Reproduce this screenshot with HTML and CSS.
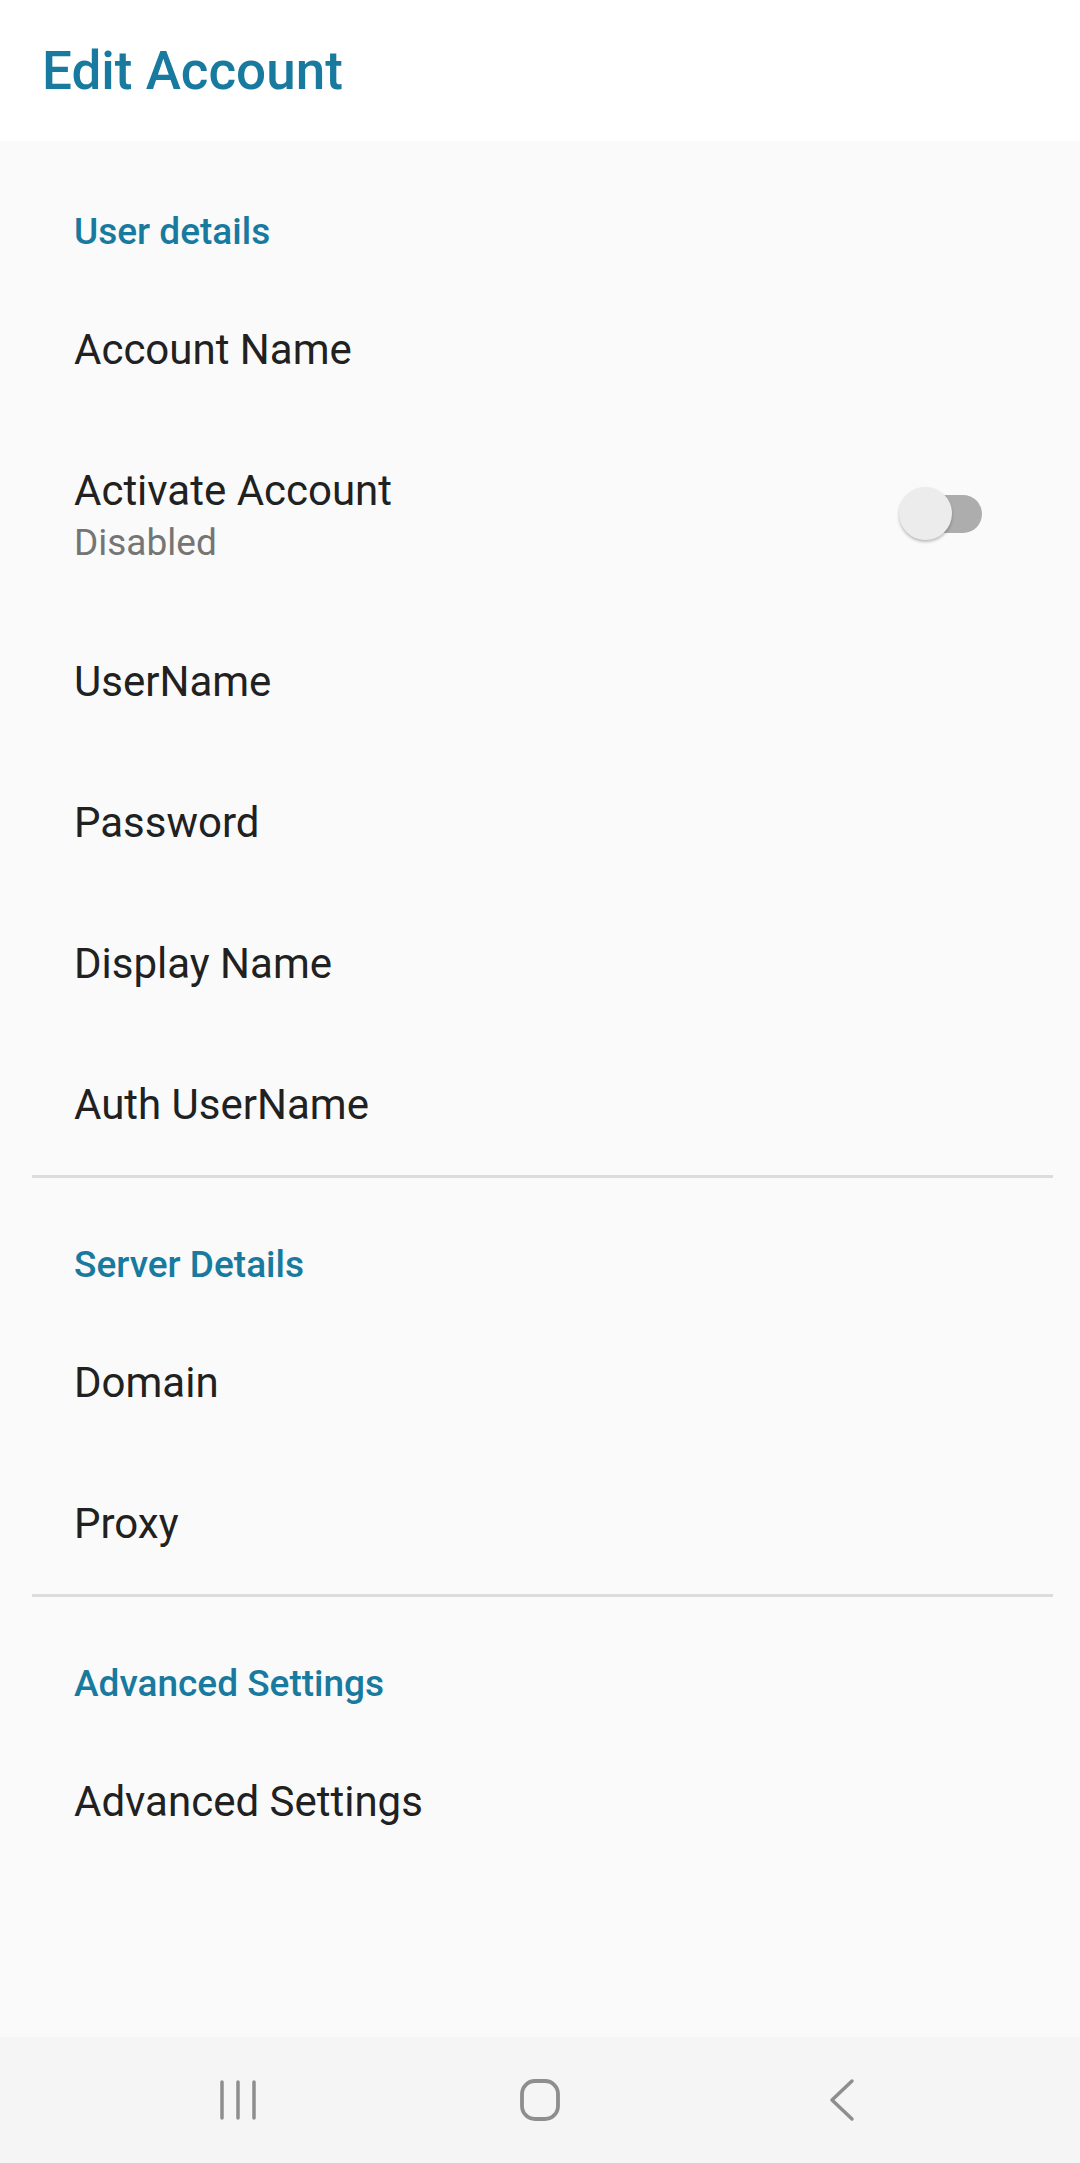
FILE: index.html
```html
<!DOCTYPE html>
<html lang="en">
<head>
    <meta charset="UTF-8">
    <meta name="viewport" content="width=device-width, initial-scale=1.0">
    <title>Edit Account</title>
    <link rel="stylesheet" href="styles.css">
</head>
<body>
    <div class="app-bar">
        <h1>Edit Account</h1>
    </div>

    <div class="content">
        <div class="category first">User details</div>
        <div class="pref">Account Name</div>
        <div class="pref pref-switch">
            <div class="pref-text">
                <div class="pref-title">Activate Account</div>
                <div class="pref-summary">Disabled</div>
            </div>
            <div class="switch">
                <div class="switch-track"></div>
                <div class="switch-thumb"></div>
            </div>
        </div>
        <div class="pref">UserName</div>
        <div class="pref">Password</div>
        <div class="pref">Display Name</div>
        <div class="pref">Auth UserName</div>
        <div class="divider"></div>

        <div class="category">Server Details</div>
        <div class="pref">Domain</div>
        <div class="pref">Proxy</div>
        <div class="divider"></div>

        <div class="category">Advanced Settings</div>
        <div class="pref">Advanced Settings</div>
    </div>

    <div class="nav-bar">
        <div class="nav-btn">
            <svg width="40" height="42" viewBox="0 0 40 42">
                <g stroke="#8e8e8e" stroke-width="3.5" stroke-linecap="round">
                    <line x1="4" y1="3" x2="4" y2="39"/>
                    <line x1="20" y1="3" x2="20" y2="39"/>
                    <line x1="36" y1="3" x2="36" y2="39"/>
                </g>
            </svg>
        </div>
        <div class="nav-btn">
            <svg width="42" height="44" viewBox="0 0 42 44">
                <rect x="3" y="3" width="36" height="38" rx="13" fill="none" stroke="#8e8e8e" stroke-width="3.8"/>
            </svg>
        </div>
        <div class="nav-btn">
            <svg width="28" height="44" viewBox="0 0 28 44">
                <polyline points="24,3 4,22 24,41" fill="none" stroke="#8e8e8e" stroke-width="3.5" stroke-linecap="round" stroke-linejoin="round"/>
            </svg>
        </div>
    </div>
</body>
</html>
```

FILE: styles.css
```css
body {
    margin: 0;
    height: 100vh;
    display: flex;
    flex-direction: column;
    font-family: Roboto, 'Noto Sans', sans-serif;
    background: #fafafa;
    color: #212121;
}
.app-bar {
    height: 141px;
    flex-shrink: 0;
    background: #ffffff;
    display: flex;
    align-items: center;
    padding-left: 42px;
}
.app-bar h1 {
    margin: 0;
    font-size: 53px;
    font-weight: 500;
    color: #187a9f;
}
.content {
    flex: 1;
    display: flex;
    flex-direction: column;
}
.category {
    padding: 66px 0 26px 74px;
    line-height: 42px;
    font-size: 37px;
    font-weight: 500;
    color: #187a9f;
}
.category.first {
    padding-top: 70px;
}
.pref {
    height: 141px;
    display: flex;
    align-items: center;
    padding-left: 74px;
    font-size: 42px;
}
.pref-switch {
    height: 191px;
    justify-content: space-between;
    padding-right: 98px;
}
.pref-title {
    line-height: 54px;
}
.pref-summary {
    line-height: 50px;
    font-size: 37px;
    color: #757575;
}
.switch {
    position: relative;
    width: 83px;
    height: 53px;
    margin-bottom: 4px;
}
.switch-track {
    position: absolute;
    right: 0;
    top: 8px;
    width: 72px;
    height: 38px;
    border-radius: 19px;
    background: #adadad;
}
.switch-thumb {
    position: absolute;
    left: 0;
    top: 0;
    width: 53px;
    height: 53px;
    border-radius: 50%;
    background: #ececec;
    box-shadow: 0 2px 3px rgba(0, 0, 0, 0.25);
}
.divider {
    height: 3px;
    margin: 0 27px 0 32px;
    background: #dcdcdc;
}
.nav-bar {
    height: 126px;
    flex-shrink: 0;
    background: #f5f5f5;
    display: flex;
    justify-content: center;
    align-items: center;
}
.nav-btn {
    width: 302px;
    display: flex;
    justify-content: center;
    align-items: center;
}
```
